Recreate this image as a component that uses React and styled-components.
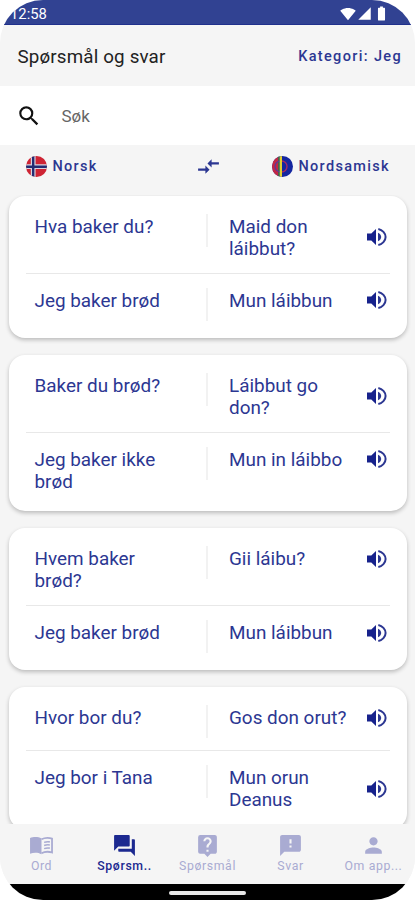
import React from 'react';
import styled, { createGlobalStyle } from 'styled-components';
import {
    MdSearch, MdCompareArrows, MdQuestionAnswer, MdLiveHelp,
    MdFeedback, MdPerson, MdSignalWifi4Bar, MdSignalCellular4Bar, MdBatteryFull
} from 'react-icons/md';

const GlobalStyle = createGlobalStyle`
    * {
        box-sizing: border-box;
    }
    body {
        margin: 0;
        background: #fff;
        font-family: Roboto, "Liberation Sans", sans-serif;
    }
    svg {
        display: block;
        flex-shrink: 0;
    }
`;

const Screen = styled.div`
    display: flex;
    flex-direction: column;
    width: 415px;
    height: 900px;
    overflow: hidden;
    border-radius: 43px;
    background: #f5f5f5;
    color: #2c3792;
`;

const StatusBar = styled.div`
    display: flex;
    align-items: center;
    justify-content: space-between;
    flex-shrink: 0;
    height: 25px;
    padding: 3px 25px 0 10px;
    background: #314292;
    border-bottom: 1px solid #20308c;
    color: #fff;
    font-size: 14.8px;
    line-height: 20px;

    & > div {
        display: flex;
        align-items: center;
        gap: 1px;
    }
`;

const Header = styled.div`
    display: flex;
    align-items: center;
    justify-content: space-between;
    flex-shrink: 0;
    height: 61px;
    padding: 2px 13px 0 17.5px;

    & > h1 {
        margin: 0;
        color: #222;
        font-size: 18.8px;
        font-weight: 400;
        letter-spacing: 0.16px;
    }
    & > span {
        font-size: 14.5px;
        font-weight: 500;
        letter-spacing: 1.35px;
    }
`;

const SearchBar = styled.div`
    display: flex;
    align-items: center;
    gap: 20px;
    flex-shrink: 0;
    height: 59px;
    padding: 0 15.5px;
    background: #fff;
    color: #666;
    font-size: 17px;

    & > svg {
        color: #111;
    }
`;

const Languages = styled.div`
    display: grid;
    grid-template-columns: 169.5px 1fr 143px;
    align-items: center;
    flex-shrink: 0;
    height: 50px;
    padding: 0 0 8px 26px;
`;

const Language = styled.div`
    display: flex;
    align-items: center;
    gap: 5.5px;
    font-size: 14.5px;
    font-weight: 500;
    letter-spacing: 1.3px;
`;

const List = styled.div`
    display: flex;
    flex-direction: column;
    gap: 17.3px;
    flex: 1;
    min-height: 0;
    overflow: hidden;
    padding: 0.5px 8px 0 9px;
`;

const Card = styled.div`
    flex-shrink: 0;
    padding: 0 17px;
    border-radius: 16px;
    background: #fff;
    box-shadow: 0 2px 4px rgba(0, 0, 0, 0.24);
`;

const Row = styled.div`
    display: grid;
    grid-template-columns: 172px 9px 1fr;
    padding: ${props => props.$first ? '20px 0 13px' : '16px 0 18px'};
    border-bottom: ${props => props.$first ? '1px solid #e8e8e8' : 'none'};
    font-size: 18.9px;
    line-height: 22px;
`;

const Phrase = styled.div`
    width: 145px;
    min-height: 30px;
    padding-left: 8.5px;
`;

const Separator = styled.div`
    width: 2px;
    height: 33px;
    margin: -2px 0 -1px 8px;
    background: #f2f2f2;
`;

const Translation = styled.div`
    display: flex;
    align-items: center;
    align-self: start;
    justify-content: space-between;
    padding: 0 3px 0 22px;

    & > span {
        width: 122px;
    }
    & > svg {
        margin-top: -1px;
    }
`;

const TabBar = styled.div`
    display: grid;
    grid-template-columns: repeat(5, 83px);
    flex-shrink: 0;
    height: 60px;
    background: #f5f5f5;
`;

const Tab = styled.div`
    display: flex;
    flex-direction: column;
    align-items: center;
    padding-top: 9px;
    color: ${props => props.$active ? '#1c2990' : '#a9abd2'};
    font-size: 12.3px;
    font-weight: ${props => props.$active ? 500 : 400};
    line-height: 17px;
    letter-spacing: ${props => props.$active ? '0.65px' : '0.6px'};
`;

const HomeBar = styled.div`
    display: flex;
    justify-content: center;
    flex-shrink: 0;
    height: 16px;
    padding-top: 7px;
    background: #000;

    & > div {
        width: 77px;
        height: 4px;
        border-radius: 2px;
        background: #e8e8e8;
    }
`;

const Speaker = () => (
    <svg width="20" height="20" viewBox="0 0 20 20">
        <path fill="#17228c" d="M0 6.5h4.3L9 2v16l-4.7-4.5H0z" />
        <path fill="#2c3792" d="M11 5.8c1.9.8 3.2 2.400 3.200 4.200s-1.300 3.400-3.200 4.200z" />
        <path fill="none" stroke="#2c3792" strokeWidth="2" d="M11.300 1.900c4 .9 7.300 4.300 7.300 8.100s-3.300 7.200-7.300 8.100" />
    </svg>
);

const Book = ({ size }) => (
    <svg width={size} height={size} viewBox="0 0 24 24">
        <path fill="currentColor" d="M12 5.200C10.300 4.200 8.300 3.800 6.200 3.800 4.400 3.800 2.500 4.100 1 4.900v15c1.600-.7 3.400-1 5.200-1 2 0 4.200.4 5.800 1.600z" />
        <path fill="none" stroke="currentColor" strokeWidth="1.700" d="M12 6c1.800-1 3.700-1.400 5.700-1.400 1.500 0 3 .2 4.400.8v13.300c-1.500-.5-2.900-.7-4.400-.7-2 0-4 .5-5.700 1.500" />
        <path fill="none" stroke="currentColor" strokeWidth="1.500" d="M14.500 9c1.600-.6 3.600-.8 5.500-.5M14.500 12c1.600-.6 3.600-.8 5.500-.5M14.500 15c1.600-.6 3.600-.8 5.500-.5" />
    </svg>
);

const NorwegianFlag = () => (
    <svg width="21" height="21" viewBox="0 0 21 21">
        <clipPath id="norsk"><circle cx="10.5" cy="10.5" r="10.5" /></clipPath>
        <g clipPath="url(#norsk)">
            <path fill="#ce2434" d="M0 0h21v21H0z" />
            <path fill="#d8d4e0" d="M4.800 0h4.800v21H4.800zM0 8.300h21v4.800H0z" />
            <path fill="#232b72" d="M6 0h2.400v21H6zM0 9.600h21v2.300H0z" />
        </g>
    </svg>
);

const SamiFlag = () => (
    <svg width="21" height="21" viewBox="0 0 21 21">
        <clipPath id="sami"><circle cx="10.5" cy="10.5" r="10.5" /></clipPath>
        <g clipPath="url(#sami)">
            <path fill="#1426a0" d="M0 0h21v21H0z" />
            <path fill="#c42745" d="M0 0h6.500v21H0z" />
            <path fill="#3a7548" d="M6.200 0h1.800v21H6.200z" />
            <path fill="none" stroke="#5a3a9a" strokeWidth="1.300" d="M8.500 5a5.500 5.500 0 0 0 0 11" />
            <path fill="none" stroke="#a52a62" strokeWidth="1.400" d="M9.500 5a5.500 5.500 0 0 1 0 11" />
            <path fill="#e0cf32" d="M7.800 0h2.200v21H7.800z" />
        </g>
    </svg>
);

const cards = [
    [['Hva baker du?', 'Maid don láibbut?'], ['Jeg baker brød', 'Mun láibbun']],
    [['Baker du brød?', 'Láibbut go don?'], ['Jeg baker ikke brød', 'Mun in láibbo']],
    [['Hvem baker brød?', 'Gii láibu?'], ['Jeg baker brød', 'Mun láibbun']],
    [['Hvor bor du?', 'Gos don orut?'], ['Jeg bor i Tana', 'Mun orun Deanus']]
];

const tabs = [
    { label: 'Ord', icon: Book },
    { label: 'Spørsm..', icon: MdQuestionAnswer, active: true },
    { label: 'Spørsmål', icon: MdLiveHelp },
    { label: 'Svar', icon: MdFeedback },
    { label: 'Om app...', icon: MdPerson }
];

function App() {
    return (
        <Screen>
            <GlobalStyle />
            <StatusBar>
                <span>12:58</span>
                <div>
                    <MdSignalWifi4Bar size={16} />
                    <MdSignalCellular4Bar size={15} />
                    <MdBatteryFull size={17} />
                </div>
            </StatusBar>
            <Header>
                <h1>Spørsmål og svar</h1>
                <span>Kategori: Jeg</span>
            </Header>
            <SearchBar>
                <MdSearch size={26} />
                <span>Søk</span>
            </SearchBar>
            <Languages>
                <Language><NorwegianFlag />Norsk</Language>
                <MdCompareArrows size={25} />
                <Language><SamiFlag />Nordsamisk</Language>
            </Languages>
            <List>
                {cards.map((rows, i) => (
                    <Card key={i}>
                        {rows.map(([norsk, samisk], j) => (
                            <Row key={j} $first={j === 0}>
                                <Phrase>{norsk}</Phrase>
                                <Separator />
                                <Translation>
                                    <span>{samisk}</span>
                                    <Speaker />
                                </Translation>
                            </Row>
                        ))}
                    </Card>
                ))}
            </List>
            <TabBar>
                {tabs.map(({ label, icon: Icon, active }) => (
                    <Tab key={label} $active={active}>
                        <Icon size={25} />
                        <span>{label}</span>
                    </Tab>
                ))}
            </TabBar>
            <HomeBar><div /></HomeBar>
        </Screen>
    );
}

export default App;
